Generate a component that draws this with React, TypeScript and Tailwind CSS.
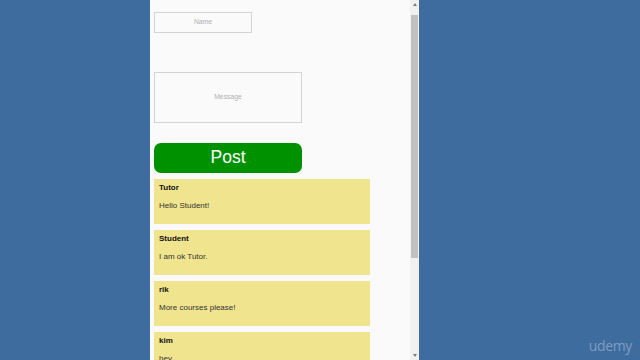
import React from "react";

const posts = [
  { name: "Tutor", msg: "Hello Student!" },
  { name: "Student", msg: "I am ok Tutor." },
  { name: "rik", msg: "More courses please!" },
  { name: "kim", msg: "hey" },
];

export default function App() {
  return (
    <div
      className="relative w-[640px] h-[360px] overflow-hidden bg-[#3e6c9e] flex"
      style={{ fontFamily: '"Liberation Sans", Arial, sans-serif' }}
    >
      <div className="ml-[150px] w-[269px] h-full bg-[#fafafa] flex">
        <div className="w-[260px] h-full pl-[4px] pt-[12px] flex flex-col items-start overflow-hidden">
          <div className="shrink-0 w-[98px] h-[21px] border border-[#d4d4d4] flex items-center justify-center text-[6.8px] text-[#b0b0b0]">
            Name
          </div>
          <div className="shrink-0 mt-[39px] w-[148px] h-[51px] border border-[#d4d4d4] flex items-center justify-center text-[6.8px] text-[#b0b0b0]">
            Message
          </div>
          <div className="shrink-0 mt-[20px] w-[148px] h-[30px] rounded-[7px] bg-[#009100] flex items-center justify-center text-[17.5px] text-white leading-none">
            Post
          </div>
          <div className="shrink-0 mt-[6px] flex flex-col gap-[6px]">
            {posts.map((p) => (
              <div key={p.name} className="w-[216px] h-[45px] shrink-0 bg-[#f0e48e] pl-[5px] pt-[4px] text-[8px] text-[#222]">
                <div className="font-bold leading-[10px] text-[#111]">{p.name}</div>
                <div className="mt-[8px] leading-[10px] text-[#333]">{p.msg}</div>
              </div>
            ))}
          </div>
        </div>
        <div className="w-[9px] h-full bg-[#f1f1f1] flex flex-col items-center">
          <div className="h-[15px] shrink-0 flex items-center justify-center">
            <div className="w-0 h-0 border-l-[2.5px] border-r-[2.5px] border-b-[3px] border-l-transparent border-r-transparent border-b-[#777] mt-[-6px]" />
          </div>
          <div className="shrink-0 w-[7px] h-[243px] bg-[#c1c1c1]" />
          <div className="flex-1" />
          <div className="h-[10px] shrink-0 flex items-center justify-center">
            <div className="w-0 h-0 border-l-[2.5px] border-r-[2.5px] border-t-[3px] border-l-transparent border-r-transparent border-t-[#777]" />
          </div>
        </div>
      </div>
      <div className="absolute right-[8px] bottom-[4px] text-[14px] text-[#7f9dc2] tracking-tight" style={{ fontFamily: '"Open Sans", sans-serif' }}>
        udemy
      </div>
    </div>
  );
}
